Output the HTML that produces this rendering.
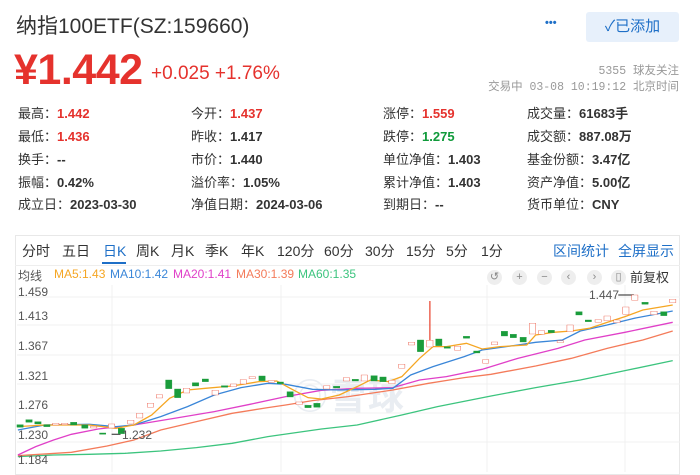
<!DOCTYPE html>
<html><head><meta charset="utf-8">
<style>
*{margin:0;padding:0;box-sizing:border-box}
body{width:700px;height:472px;overflow:hidden;background:#fff;font-family:"Liberation Sans","Noto Sans CJK SC",sans-serif;color:#333;position:relative}
.a{position:absolute;white-space:nowrap}
.title{left:16px;top:10px;font-size:21px;color:#333}
.price{left:14px;top:46px;font-size:43px;font-weight:bold;color:#e5322d;letter-spacing:-0.5px}
.chg{left:151px;top:63px;font-size:19px;color:#e5322d}
.btn{left:586px;top:12px;width:93px;height:30px;background:#e7f0fb;border-radius:3px;color:#1e6fc7;font-size:15px;line-height:30px;text-align:center}
.dots{left:545px;top:17px;color:#1e6fc7;font-size:11px;font-weight:bold;letter-spacing:0px}
.meta{right:21px;font-family:"Liberation Mono","Noto Sans CJK SC",monospace;font-size:11.5px;color:#999;text-align:right}
.st{font-size:13px;color:#333}
.st b{font-weight:bold;color:#333}
.st b.r{color:#e5322d}.st b.g{color:#0f9a3a}
.tab{top:241px;font-size:14px;color:#333}
.lg{top:267px;font-size:12px}
.ic{top:270px;width:15px;height:15px;border-radius:50%;background:#eee;color:#888;font-size:11px;line-height:15px;text-align:center}
.ax{font-size:12px;color:#555;left:18px}
</style></head><body>
<div class="a title">纳指100ETF(SZ:159660)</div>
<div class="a dots">•••</div>
<div class="a btn">✓已添加</div>
<div class="a price">¥1.442</div>
<div class="a chg">+0.025 +1.76%</div>
<div class="a meta" style="top:62px">5355 球友关注</div>
<div class="a meta" style="top:78px">交易中 03-08 10:19:12 北京时间</div>

<div class="a st" style="left:18px;top:103px">最高：<b class="r">1.442</b></div>
<div class="a st" style="left:18px;top:126px">最低：<b class="r">1.436</b></div>
<div class="a st" style="left:18px;top:149px">换手：<b>--</b></div>
<div class="a st" style="left:18px;top:172px">振幅：<b>0.42%</b></div>
<div class="a st" style="left:18px;top:194px">成立日：<b>2023-03-30</b></div>

<div class="a st" style="left:191px;top:103px">今开：<b class="r">1.437</b></div>
<div class="a st" style="left:191px;top:126px">昨收：<b>1.417</b></div>
<div class="a st" style="left:191px;top:149px">市价：<b>1.440</b></div>
<div class="a st" style="left:191px;top:172px">溢价率：<b>1.05%</b></div>
<div class="a st" style="left:191px;top:194px">净值日期：<b>2024-03-06</b></div>

<div class="a st" style="left:383px;top:103px">涨停：<b class="r">1.559</b></div>
<div class="a st" style="left:383px;top:126px">跌停：<b class="g">1.275</b></div>
<div class="a st" style="left:383px;top:149px">单位净值：<b>1.403</b></div>
<div class="a st" style="left:383px;top:172px">累计净值：<b>1.403</b></div>
<div class="a st" style="left:383px;top:194px">到期日：<b>--</b></div>

<div class="a st" style="left:527px;top:103px">成交量：<b>61683手</b></div>
<div class="a st" style="left:527px;top:126px">成交额：<b>887.08万</b></div>
<div class="a st" style="left:527px;top:149px">基金份额：<b>3.47亿</b></div>
<div class="a st" style="left:527px;top:172px">资产净值：<b>5.00亿</b></div>
<div class="a st" style="left:527px;top:194px">货币单位：<b>CNY</b></div>

<div class="a" style="left:15px;top:235px;width:665px;height:240px;border:1px solid #e8e8e8"></div>
<div class="a" style="left:15px;top:265px;width:665px;height:1px;background:#eee"></div>
<div class="a tab" style="left:22px">分时</div>
<div class="a tab" style="left:62px">五日</div>
<div class="a tab" style="left:103px;color:#1e6fc7">日K</div>
<div class="a" style="left:102px;top:262px;width:24px;height:2px;background:#1e6fc7"></div>
<div class="a tab" style="left:136px">周K</div>
<div class="a tab" style="left:171px">月K</div>
<div class="a tab" style="left:205px">季K</div>
<div class="a tab" style="left:241px">年K</div>
<div class="a tab" style="left:277px">120分</div>
<div class="a tab" style="left:324px">60分</div>
<div class="a tab" style="left:365px">30分</div>
<div class="a tab" style="left:406px">15分</div>
<div class="a tab" style="left:446px">5分</div>
<div class="a tab" style="left:481px">1分</div>
<div class="a tab" style="left:553px;color:#1e6fc7">区间统计</div>
<div class="a tab" style="left:618px;color:#1e6fc7">全屏显示</div>

<div class="a lg" style="left:18px;color:#555">均线</div>
<div class="a lg" style="left:54px;color:#f5a623">MA5:1.43</div>
<div class="a lg" style="left:110px;color:#3a86d8">MA10:1.42</div>
<div class="a lg" style="left:173px;color:#e040c8">MA20:1.41</div>
<div class="a lg" style="left:236px;color:#f47b5a">MA30:1.39</div>
<div class="a lg" style="left:298px;color:#3cc47e">MA60:1.35</div>
<div class="a ic" style="left:487px">↺</div>
<div class="a ic" style="left:512px">+</div>
<div class="a ic" style="left:537px">−</div>
<div class="a ic" style="left:561px">‹</div>
<div class="a ic" style="left:587px">›</div>
<div class="a ic" style="left:611px">▯</div>
<div class="a" style="left:630px;top:267px;font-size:13px;color:#333">前复权</div>

<div class="a" style="left:292px;top:368px;font-size:36px;font-weight:bold;color:#e9edf2;letter-spacing:2px">◎雪球</div>

<svg class="a" style="left:0;top:0" width="700" height="472">
<g stroke="#f0f0f0" stroke-width="1">
<line x1="17" y1="297" x2="680" y2="297"/><line x1="17" y1="325" x2="680" y2="325"/><line x1="17" y1="355" x2="680" y2="355"/><line x1="17" y1="384" x2="680" y2="384"/><line x1="17" y1="413" x2="680" y2="413"/><line x1="17" y1="442" x2="680" y2="442"/>
<line x1="112" y1="285" x2="112" y2="472"/><line x1="281" y1="285" x2="281" y2="472"/><line x1="487" y1="285" x2="487" y2="472"/><line x1="625" y1="285" x2="625" y2="472"/>
</g>
<g transform="translate(0,225) scale(0.4464,0.3333)" fill="none" stroke-width="1.3">
<polyline vector-effect="non-scaling-stroke" stroke="#3cc47e" points="40,695 120,690 200,688 280,685 360,678 440,668 520,655 600,635 720,612 800,600 900,570 980,545 1100,513 1200,488 1300,465 1400,437 1507,407"/>
<polyline vector-effect="non-scaling-stroke" stroke="#f47b5a" points="40,692 160,682 240,663 300,645 360,615 440,590 520,565 600,548 640,540 700,527 780,515 880,495 960,475 1040,458 1100,448 1200,423 1280,400 1360,370 1440,345 1507,318"/>
<polyline vector-effect="non-scaling-stroke" stroke="#e040c8" points="40,690 80,665 120,645 160,628 220,612 300,600 400,578 480,560 560,538 640,515 720,496 800,490 880,488 940,465 1000,455 1080,433 1160,400 1250,370 1310,345 1400,322 1507,292"/>
<polyline vector-effect="non-scaling-stroke" stroke="#3a86d8" points="40,615 100,600 200,598 260,605 300,600 360,575 420,545 480,510 540,488 600,475 640,478 700,493 760,495 840,493 880,490 920,450 970,425 1040,395 1080,375 1160,360 1200,352 1260,345 1300,318 1360,300 1420,280 1507,258"/>
<polyline vector-effect="non-scaling-stroke" stroke="#f5a623" points="40,605 100,600 200,600 260,610 300,600 340,570 380,520 420,495 460,490 520,483 580,470 620,468 650,490 690,518 720,522 760,510 800,485 830,465 870,470 900,455 940,400 970,365 1000,365 1045,355 1080,372 1120,365 1180,360 1200,330 1240,322 1280,318 1320,310 1360,292 1400,275 1440,255 1507,240"/>
<line vector-effect="non-scaling-stroke" stroke="#e94e3a" x1="963" y1="228" x2="963" y2="350"/>
<line vector-effect="non-scaling-stroke" stroke="#555" x1="250" y1="628" x2="270" y2="628"/>
<line vector-effect="non-scaling-stroke" stroke="#555" x1="1385" y1="210" x2="1420" y2="210"/>
</g>
<g transform="translate(0,225) scale(0.4464,0.3333)" stroke-width="1">
<g fill="#1a9c3b" stroke="#1a9c3b">
<rect x="38" y="599" width="14" height="8"/><rect x="58" y="584" width="14" height="8"/><rect x="78" y="590" width="14" height="7"/><rect x="98" y="599" width="14" height="6"/><rect x="158" y="592" width="14" height="8"/><rect x="183" y="600" width="14" height="10"/><rect x="223" y="624" width="14" height="4"/><rect x="265" y="610" width="14" height="16"/><rect x="371" y="465" width="14" height="26"/><rect x="391" y="492" width="14" height="26"/><rect x="431" y="473" width="14" height="10"/><rect x="453" y="462" width="14" height="8"/><rect x="496" y="482" width="14" height="5"/><rect x="580" y="453" width="14" height="14"/><rect x="621" y="471" width="14" height="5"/><rect x="643" y="500" width="14" height="16"/><rect x="683" y="541" width="14" height="7"/><rect x="703" y="535" width="14" height="12"/><rect x="747" y="484" width="14" height="5"/><rect x="789" y="463" width="14" height="5"/><rect x="831" y="452" width="14" height="16"/><rect x="851" y="456" width="14" height="14"/><rect x="935" y="345" width="14" height="35"/><rect x="976" y="342" width="14" height="20"/><rect x="995" y="365" width="14" height="5"/><rect x="1038" y="334" width="14" height="6"/><rect x="1061" y="378" width="14" height="6"/><rect x="1123" y="319" width="14" height="14"/><rect x="1143" y="328" width="14" height="10"/><rect x="1165" y="337" width="14" height="14"/><rect x="1228" y="316" width="14" height="7"/><rect x="1290" y="260" width="14" height="10"/><rect x="1311" y="285" width="14" height="5"/><rect x="1438" y="232" width="14" height="6"/><rect x="1480" y="260" width="14" height="12"/>
</g>
<g fill="#fff" stroke="#e94e3a">
<rect x="118" y="595" width="14" height="5"/><rect x="138" y="595" width="14" height="4"/><rect x="203" y="604" width="14" height="5"/><rect x="243" y="597" width="14" height="12"/><rect x="286" y="586" width="14" height="11"/><rect x="306" y="565" width="14" height="14"/><rect x="330" y="535" width="14" height="12"/><rect x="350" y="509" width="14" height="10"/><rect x="411" y="490" width="14" height="14"/><rect x="475" y="496" width="14" height="14"/><rect x="516" y="477" width="14" height="8"/><rect x="538" y="464" width="14" height="13"/><rect x="558" y="455" width="14" height="6"/><rect x="601" y="467" width="14" height="5"/><rect x="663" y="531" width="14" height="8"/><rect x="725" y="482" width="14" height="10"/><rect x="769" y="458" width="14" height="10"/><rect x="809" y="450" width="14" height="18"/><rect x="871" y="466" width="14" height="10"/><rect x="893" y="418" width="14" height="12"/><rect x="915" y="352" width="14" height="8"/><rect x="956" y="346" width="14" height="20"/><rect x="1018" y="364" width="14" height="12"/><rect x="1081" y="404" width="14" height="11"/><rect x="1101" y="351" width="14" height="8"/><rect x="1186" y="295" width="14" height="32"/><rect x="1206" y="317" width="14" height="11"/><rect x="1248" y="347" width="14" height="6"/><rect x="1270" y="300" width="14" height="20"/><rect x="1333" y="284" width="14" height="8"/><rect x="1353" y="273" width="14" height="14"/><rect x="1375" y="285" width="14" height="8"/><rect x="1395" y="246" width="14" height="22"/><rect x="1415" y="210" width="14" height="16"/><rect x="1458" y="259" width="14" height="10"/><rect x="1500" y="223" width="14" height="10"/>
</g>
</g>
</svg>
<div class="a ax" style="top:285px">1.459</div>
<div class="a ax" style="top:309px">1.413</div>
<div class="a ax" style="top:339px">1.367</div>
<div class="a ax" style="top:369px">1.321</div>
<div class="a ax" style="top:398px">1.276</div>
<div class="a ax" style="top:428px">1.230</div>
<div class="a ax" style="top:453px">1.184</div>
<div class="a ax" style="left:122px;top:428px">1.232</div>
<div class="a ax" style="left:589px;top:288px">1.447</div>
</body></html>
